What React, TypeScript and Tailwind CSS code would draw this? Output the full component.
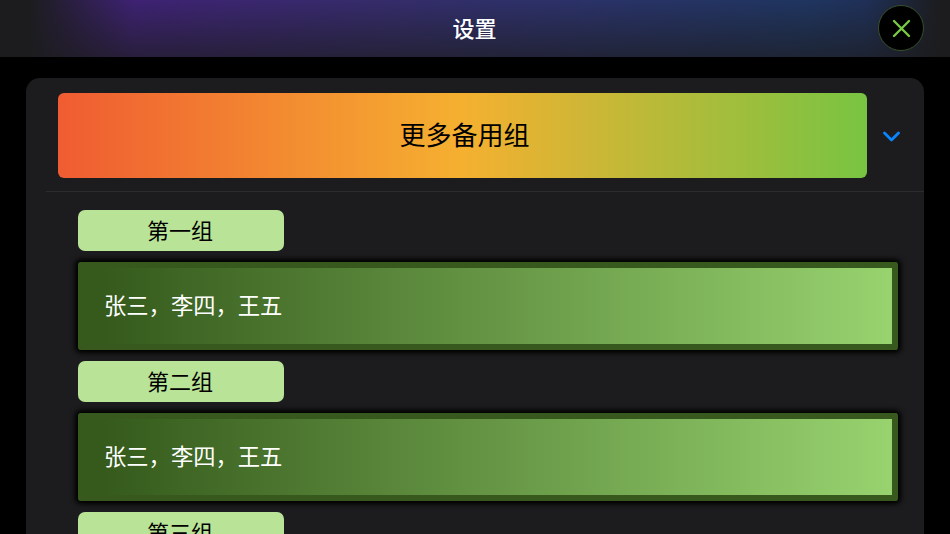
import React from "react";

const font = { fontFamily: '"Noto Sans CJK SC", sans-serif' };

function Group({ title }: { title: string }) {
  return (
    <div className="flex flex-col gap-[11px]">
      <div className="w-[206px] h-[41px] rounded-[7px] bg-[#b9e498] flex items-center justify-center pb-[3px] pr-[2px] text-[22px] leading-[30px] text-black">
        {title}
      </div>
      <div className="w-[820px] h-[88px] rounded-[3px] border-[6px] border-l-0 border-[#38591e] bg-[linear-gradient(90deg,#355a1c_0%,#355a1c_3%,#98d36f_100%)] shadow-[0_0_5px_3px_#000] flex items-center pl-[26px] pb-[5px] text-[22.3px] leading-[30px] text-white">
        张三，李四，王五
      </div>
    </div>
  );
}

export default function App() {
  return (
    <div className="w-[950px] h-[534px] overflow-hidden bg-black flex flex-col" style={font}>
      <header className="relative h-[57px] shrink-0 bg-[linear-gradient(90deg,#1c1c1e_0%,#1c1c1e_3%,#3e2273_14%,#352c6b_40%,#2a3268_62%,#1f3560_85%,#1f3058_91%,#1c1c1e_99%)] flex items-center justify-center">
        <div className="absolute inset-0 bg-gradient-to-b from-transparent to-[#1c1c1e]/65" />
        <span className="relative text-[22px] leading-[30px] font-medium text-white pb-[3px] pr-[1px]">设置</span>
        <button className="absolute left-[878px] top-[5px] w-[46px] h-[46px] rounded-full bg-black border border-[#37502a] flex items-center justify-center">
          <svg width="19" height="19" viewBox="0 0 19 19" fill="none" stroke="#7ac943" strokeWidth="2.4" strokeLinecap="round">
            <path d="M2 2 L17 17 M17 2 L2 17" />
          </svg>
        </button>
      </header>
      <main className="ml-[26px] mt-[21px] w-[898px] flex-1 rounded-t-[14px] bg-[#1c1c1e] flex flex-col">
        <div className="ml-[20px] pl-[12px] pt-[15px] pb-[13px] border-b border-[#2c2c2e] flex items-center">
          <div className="w-[809px] h-[85px] rounded-[6px] bg-[linear-gradient(90deg,#f05c32_0%,#f5b030_50%,#78c442_100%)] flex items-center justify-center text-[26px] leading-[36px] text-black">
            <span className="ml-[4px] pb-[3px]">更多备用组</span>
          </div>
          <svg className="ml-[16px] mt-[2px]" width="17" height="11" viewBox="0 0 17 11" fill="none" stroke="#0a84ff" strokeWidth="2.8" strokeLinecap="round" strokeLinejoin="round">
            <path d="M1.5 2 L8.5 9 L15.5 2" />
          </svg>
        </div>
        <div className="ml-[52px] mt-[18px] flex flex-col gap-[11px]">
          <Group title="第一组" />
          <Group title="第二组" />
          <Group title="第三组" />
        </div>
      </main>
    </div>
  );
}
